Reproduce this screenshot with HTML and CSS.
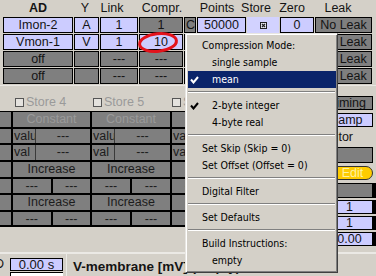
FILE: index.html
```html
<!DOCTYPE html>
<html>
<head>
<meta charset="utf-8">
<link rel="stylesheet" href="styles.css">
</head>
<body>
<div class="top">
  <div class="hdr">
    <span class="h h-ad">AD</span><span class="h h-y">Y</span><span class="h h-link">Link</span><span class="h h-compr">Compr.</span><span class="h h-points">Points</span><span class="h h-store">Store</span><span class="h h-zero">Zero</span><span class="h h-leak">Leak</span>
  </div>
  <div class="row">
    <span class="c lav w-ad">Imon-2</span><span class="c lav w-y">A</span><span class="c lav w-link">1</span><span class="c dk w-compr">1</span><span class="c dk w-c">C</span><span class="c lav w-points">50000</span><span class="c lav2 w-store"><svg class="stbox" viewBox="0 0 7 7"><rect x="0.5" y="0.5" width="6" height="6" fill="#e8e8f0" stroke="#222"/><path d="M2 2 L5 5 M5 2 L2 5" stroke="#222" stroke-width="1.2"/></svg></span><span class="c lav w-zero">0</span><span class="c dk w-leak">No Leak</span>
  </div>
  <div class="row">
    <span class="c lav w-ad">Vmon-1</span><span class="c lav w-y">V</span><span class="c lav w-link">1</span><span class="c lav w-compr">10</span><span class="c dk w-c">C</span><span class="c lav w-points">50000</span><span class="c lav2 w-store"></span><span class="c lav w-zero">0</span><span class="c dk w-leak">No Leak</span>
  </div>
  <div class="row">
    <span class="c dk w-ad">off</span><span class="c dk w-y"></span><span class="c dk w-link">---</span><span class="c dk w-compr">---</span><span class="c dk w-c"></span><span class="c dk w-points">---</span><span class="c dk w-store"></span><span class="c dk w-zero">---</span><span class="c dk w-leak">No Leak</span>
  </div>
  <div class="row">
    <span class="c dk w-ad">off</span><span class="c dk w-y"></span><span class="c dk w-link">---</span><span class="c dk w-compr">---</span><span class="c dk w-c"></span><span class="c dk w-points">---</span><span class="c dk w-store"></span><span class="c dk w-zero">---</span><span class="c dk w-leak">No Leak</span>
  </div>
</div>
<div class="rule"></div>
<div class="mid">
  <div class="left">
    <div class="stores">
      <span class="st st1"><span class="cb"></span>Store 4</span>
      <span class="st"><span class="cb"></span>Store 5</span>
      <span class="st"><span class="cb"></span>Store 6</span>
      <span class="st"><span class="cb"></span>Store 7</span>
    </div>
    <div class="grid">
      <div class="g"></div><div class="g dis">Constant</div><div class="g dis">Constant</div><div class="g dis">Constant</div><div class="g dis">Constant</div>
      <div class="g"></div><div class="g sp"><span class="lbl">valu</span><span class="val">---</span></div><div class="g sp"><span class="lbl">valu</span><span class="val">---</span></div><div class="g sp"><span class="lbl">valu</span><span class="val">---</span></div><div class="g sp"><span class="lbl">valu</span><span class="val">---</span></div>
      <div class="g"></div><div class="g sp"><span class="lbl">val</span><span class="val">---</span></div><div class="g sp"><span class="lbl">val</span><span class="val">---</span></div><div class="g sp"><span class="lbl">val</span><span class="val">---</span></div><div class="g sp"><span class="lbl">val</span><span class="val">---</span></div>
      <div class="g"></div><div class="g">Increase</div><div class="g">Increase</div><div class="g">Increase</div><div class="g">Increase</div>
      <div class="g"></div><div class="g hf"><span>---</span><span>---</span></div><div class="g hf"><span>---</span><span>---</span></div><div class="g hf"><span>---</span><span>---</span></div><div class="g hf"><span>---</span><span>---</span></div>
      <div class="g"></div><div class="g">Increase</div><div class="g">Increase</div><div class="g">Increase</div><div class="g">Increase</div>
      <div class="g"></div><div class="g hf"><span>---</span><span>---</span></div><div class="g hf"><span>---</span><span>---</span></div><div class="g hf"><span>---</span><span>---</span></div><div class="g hf"><span>---</span><span>---</span></div>
    </div>
  </div>
  <div class="rightp">
    <div class="rc dk r-ming">Timing</div>
    <div class="rc lav r-amp">Clamp</div>
    <div class="rlabel"><span>Monitor</span></div>
    <div class="rc dk r-d1"></div>
    <div class="pill">Edit</div>
    <div class="rc dk r-d2 bar"></div>
    <div class="rc lav r-n bar">1</div>
    <div class="rc lav r-n bar">1</div>
    <div class="rc lav r-n bar">0.00</div>
  </div>
</div>
<div class="bottom">
  <div class="bl">
    <div class="brow"><span class="dpart">D</span><span class="tval">0.00 s</span></div>
    <div class="wbox"></div>
  </div>
  <div class="vm">V-membrane [mV] (empty)</div>
</div>

<svg class="ring" viewBox="0 0 48 28"><ellipse cx="24" cy="13.5" rx="18.5" ry="8.8" transform="rotate(-6 24 13.5)" fill="none" stroke="#e3121b" stroke-width="3"/></svg>

<div class="menu">
  <div class="mi">Compression Mode:</div>
  <div class="mi ind">single sample</div>
  <div class="mi ind sel"><svg class="chk" viewBox="0 0 9 8"><path d="M1 3.5 L3.5 6.5 L8 1" fill="none" stroke="currentColor" stroke-width="2"/></svg>mean</div>
  <div class="sep"></div>
  <div class="mi ind"><svg class="chk" viewBox="0 0 9 8"><path d="M1 3.5 L3.5 6.5 L8 1" fill="none" stroke="currentColor" stroke-width="2"/></svg>2-byte integer</div>
  <div class="mi ind">4-byte real</div>
  <div class="sep"></div>
  <div class="mi">Set Skip (Skip = 0)</div>
  <div class="mi">Set Offset (Offset = 0)</div>
  <div class="sep"></div>
  <div class="mi">Digital Filter</div>
  <div class="sep"></div>
  <div class="mi">Set Defaults</div>
  <div class="sep"></div>
  <div class="mi">Build Instructions:</div>
  <div class="mi ind">empty</div>
</div>
</body>
</html>
```

FILE: styles.css
```css
* { box-sizing: border-box; margin: 0; padding: 0; }
html, body { width: 376px; height: 276px; overflow: hidden; }
body {
  background: #d4d0c8;
  font-family: "Liberation Sans", Arial, sans-serif;
  font-size: 12.5px;
  color: #141414;
  position: relative;
}

/* top table */
.hdr { display: flex; height: 16px; line-height: 16px; }
.h { text-align: center; white-space: nowrap; flex: none; }
.h-ad { width: 76px; font-weight: bold; }
.h-y { width: 18px; }
.h-link { width: 36px; }
.h-compr { width: 64px; }
.h-points { width: 46px; }
.h-store { width: 32px; }
.h-zero { width: 40px; }
.h-leak { width: 52px; }

.row { display: flex; gap: 1px; margin-top: 1px; padding-left: 3px; height: 16px; }
.c {
  flex: none;
  border: 1px solid #000;
  line-height: 14px;
  text-align: center;
  white-space: nowrap;
  overflow: hidden;
}
.lav { background: #ccccff; }
.lav2 { background: #d2d2ff; border-color: #d2d2ff; }
.dk { background: #7f7f7f; }
.w-ad { width: 70px; }
.w-y { width: 25px; }
.w-link { width: 38px; }
.w-compr { width: 44px; }
.w-c { width: 12px; text-align: left; padding-left: 1px; }
.w-points { width: 49px; }
.w-store { width: 32px; display: flex; align-items: center; justify-content: center; }
.w-zero { width: 34px; }
.w-leak { width: 57px; }
.stbox { width: 7px; height: 7px; display: block; }

.rule { height: 3px; margin-top: 1px; border-top: 1px solid #e8e6e2; }

/* middle */
.mid { display: flex; height: 158px; }
.left { width: 322px; flex: none; overflow: hidden; }
.stores { height: 23px; padding-top: 9px; display: flex; }
.st {
  flex: none;
  width: 79px;
  display: flex;
  align-items: center;
  gap: 2px;
  height: 10px;
  line-height: 10px;
  color: #9a9a9a;
  white-space: nowrap;
}
.st1 { margin-left: 15px; width: 78px; }
.cb { width: 9px; height: 9px; border: 1px solid #555; background: #e4e2de; flex: none; }

.grid {
  display: grid;
  grid-template-columns: 11px 77px 78px 78px 78px;
  grid-template-rows: 15px 14px 15px 15px 14px 15px 13px;
  gap: 2px;
  padding: 1px 0 2px 0;
  background: #000;
  width: 328px;
}
.g {
  background: #7f7f7f;
  text-align: center;
  white-space: nowrap;
  overflow: hidden;
  line-height: 14px;
  color: #1c1c1c;
}
.g.dis { color: #9a9a9a; }
.g.sp { display: flex; }
.lbl { width: 23px; text-align: left; padding-left: 1px; border-right: 1px solid #3a3a3a; flex: none; overflow: hidden; }
.val { flex: 1; text-align: center; }
.g.hf { display: flex; gap: 2px; background: #000; }
.g.hf span { flex: 1; background: #7f7f7f; text-align: center; }

.rightp { width: 54px; flex: none; display: flex; flex-direction: column; }
.rc {
  flex: none;
  width: 51px;
  border: 1px solid #000;
  text-align: center;
  white-space: nowrap;
  overflow: hidden;
  line-height: 12px;
}
.rc.bar { width: 54px; border-right-width: 4px; padding-left: 4px; }
.r-ming { margin-top: 8px; height: 14px; }
.r-amp { margin-top: 3px; height: 14px; padding-right: 6px; }
.rlabel {
  height: 20px;
  line-height: 21px;
  width: 51px;
  display: flex;
  justify-content: flex-end;
  padding-right: 20px;
  white-space: nowrap;
}
.rlabel span { flex: none; }
.r-d1 { height: 16px; }
.pill {
  margin-top: 3px;
  height: 14px;
  width: 51px;
  background: #ffcc00;
  border: 1px solid #333;
  border-radius: 7px;
  color: #fff2a0;
  line-height: 12px;
  text-align: center;
  padding-left: 10px;
}
.r-d2 { margin-top: 3px; height: 15px; }
.r-n { margin-top: 2px; height: 14px; }

/* bottom */
.bottom { display: flex; margin-top: 6px; border-top: 2px solid #ebe9e5; height: 30px; }
.bl { width: 63px; flex: none; padding-top: 4px; }
.brow { display: flex; height: 13px; }
.dpart { width: 4px; overflow: hidden; direction: rtl; line-height: 13px; flex: none; }
.tval {
  margin-left: 6px;
  width: 53px;
  height: 13px;
  background: #ccccff;
  border: 1px solid #000;
  line-height: 11px;
  text-align: center;
  font-size: 13px;
}
.wbox { margin: 1px 0 0 10px; width: 53px; height: 10px; background: #fff; border-top: 1px solid #000; border-left: 1px solid #000; }
.vm {
  margin-left: 3px;
  border-left: 1px solid #ebe9e5;
  padding: 5px 0 0 6px;
  font-weight: bold;
  font-size: 13.5px;
  line-height: 16px;
  white-space: nowrap;
}

/* overlays */
.ring { position: absolute; left: 134px; top: 29px; width: 48px; height: 28px; }

.menu {
  position: absolute;
  left: 185px;
  top: 33px;
  width: 153px;
  height: 240px;
  background: #d4d0c8;
  border: 1px solid;
  border-color: #e8e6e2 #404040 #404040 #e8e6e2;
  box-shadow: inset 1px 1px #fff, inset -1px -1px #808080;
  padding: 3px 1px 0 2px;
  font-family: "DejaVu Sans Condensed", "DejaVu Sans", sans-serif;
  font-stretch: condensed;
  font-size: 10.5px;
  color: #000;
}
.mi { height: 17px; line-height: 17px; padding-left: 14px; position: relative; white-space: nowrap; }
.mi.ind { padding-left: 24px; }
.mi.sel { background: #0a246a; color: #fff; }
.chk { position: absolute; left: 2px; top: 5px; width: 9px; height: 8px; }
.sep { height: 9px; padding: 3px 1px 0 0; }
.sep::before { content: ""; display: block; border-top: 1px solid #808080; border-bottom: 1px solid #fff; }
```
